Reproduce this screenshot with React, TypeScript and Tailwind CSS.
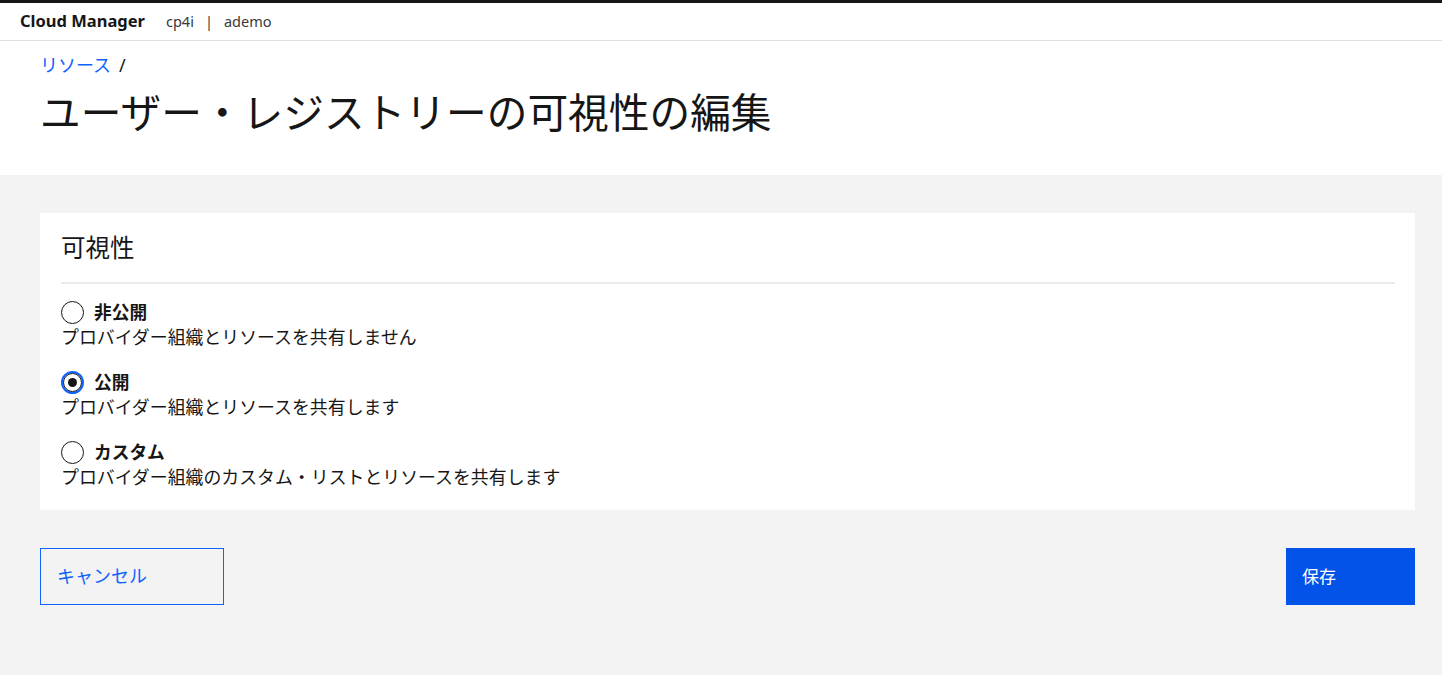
const jp = "font-['Noto_Sans','Noto_Sans_CJK_JP',sans-serif]";

function Header() {
  return (
    <div className="flex h-[41px] items-center border-t-[3px] border-b border-t-[#161616] border-b-[#e0e0e0] bg-white px-[20px]">
      <span className="font-['Noto_Sans',sans-serif] text-[16.5px] font-bold text-[#161616]">Cloud Manager</span>
      <span className="ml-[21px] font-['Noto_Sans',sans-serif] text-[14.5px] text-[#393939]">cp4i</span>
      <span className="mx-[11px] font-['Noto_Sans',sans-serif] text-[14.5px] text-[#393939]">|</span>
      <span className="font-['Noto_Sans',sans-serif] text-[14.5px] text-[#393939]">ademo</span>
    </div>
  );
}

function Radio({ checked, label, desc }: { checked?: boolean; label: string; desc: string }) {
  return (
    <div className="flex flex-col">
      <div className="flex h-[26px] items-center gap-[10px]">
        {checked ? (
          <span className="flex size-[23px] items-center justify-center rounded-full border-2 border-[#0f62fe]">
            <span className="flex size-[19px] items-center justify-center rounded-full border-[1.5px] border-[#161616]">
              <span className="size-[9px] rounded-full bg-[#161616]" />
            </span>
          </span>
        ) : (
          <span className="size-[23px] rounded-full border-[1.5px] border-[#161616]" />
        )}
        <span className={`${jp} text-[17.7px] font-bold leading-[26px] text-[#161616]`}>{label}</span>
      </div>
      <div className={`${jp} text-[17.9px] leading-[24px] text-[#161616]`}>{desc}</div>
    </div>
  );
}

export default function App() {
  return (
    <div className="flex h-[675px] w-[1442px] flex-col bg-[#f3f3f3]">
      <Header />
      <div className="flex h-[134px] flex-col bg-white px-[40px]">
        <div className={`${jp} mt-[12px] text-[18px] leading-[24px]`}>
          <span className="text-[#0f62fe]">リソース</span>
          <span className="ml-[8px] text-[#161616]">/</span>
        </div>
        <h1 className={`${jp} mt-[9px] text-[40.7px] font-normal leading-[52px] text-[#161616]`}>
          ユーザー・レジストリーの可視性の編集
        </h1>
      </div>
      <div className="pl-[40px] pr-[27px] pt-[38px]">
        <div className="flex h-[297px] flex-col bg-white px-[21px] pr-[20px]">
          <div className={`${jp} flex h-[69px] items-center pt-[2px] text-[24.5px] text-[#161616]`}>可視性</div>
          <div className="h-[2px] bg-[#ebebeb]" />
          <div className="flex flex-col gap-[20px] pt-[15px]">
            <Radio label="非公開" desc="プロバイダー組織とリソースを共有しません" />
            <Radio checked label="公開" desc="プロバイダー組織とリソースを共有します" />
            <Radio label="カスタム" desc="プロバイダー組織のカスタム・リストとリソースを共有します" />
          </div>
        </div>
        <div className="mt-[38px] flex items-start justify-between">
          <button className={`${jp} flex h-[57px] w-[184px] items-center border border-[#0f62fe] px-[16px] text-[18px] text-[#0f62fe]`}>
            キャンセル
          </button>
          <button className={`${jp} flex h-[57px] w-[129px] items-center bg-[#0353e9] px-[16px] text-[17px] text-white`}>
            保存
          </button>
        </div>
      </div>
    </div>
  );
}
